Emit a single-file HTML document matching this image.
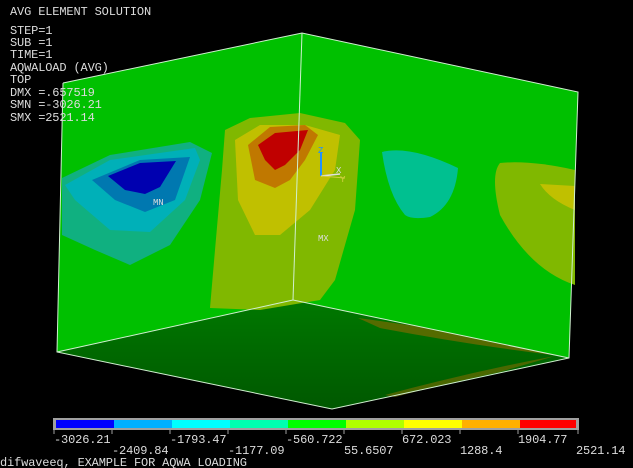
<!DOCTYPE html>
<html><head><meta charset="utf-8"><style>
html,body{margin:0;padding:0;background:#000;}
body{width:633px;height:468px;overflow:hidden;position:relative;}
svg{position:absolute;left:0;top:0;}
.t{font-family:"Liberation Mono",monospace;font-size:12px;fill:#dcdcdc;letter-spacing:-0.15px;}
</style></head><body>
<svg width="633" height="468" viewBox="0 0 633 468">
<defs>
<linearGradient id="bot" x1="0" y1="0" x2="0" y2="1">
<stop offset="0" stop-color="#007800"/><stop offset="1" stop-color="#005800"/>
</linearGradient>
</defs>
<polygon points="57,352 293,300 569,358 332,409" fill="url(#bot)"/>
<path d="M358,318 Q450,330 540,348 L560,356 Q470,345 380,328 Z" fill="#6a6a00" opacity="0.8"/>
<path d="M385,395 Q470,372 555,356 L500,372 Q440,385 395,397 Z" fill="#6a6a00" opacity="0.7"/>
<polygon points="63,83 302,33 293,300 57,352" fill="#00c000"/>
<polygon points="302,33 578,92 569,358 293,300" fill="#00c000"/>
<polygon points="62,178 110,155 190,142 212,153 200,200 170,245 130,265 95,250 62,235" fill="#10b080"/>
<polygon points="65,185 110,160 195,148 200,160 185,200 150,232 110,230 75,200" fill="#00b0b8"/>
<polygon points="92,180 140,160 190,157 175,200 145,212 115,200" fill="#0078b0"/>
<polygon points="108,176 140,163 176,161 160,187 145,194 125,190" fill="#0000b0"/>
<polygon points="225,130 250,118 300,113 345,123 360,140 355,210 335,280 320,300 260,310 210,308 215,250 222,170" fill="#80b800"/>
<polygon points="235,140 260,125 305,125 340,135 335,170 310,210 280,235 255,235 238,200" fill="#c0c000"/>
<polygon points="248,145 270,127 305,125 318,135 305,160 290,180 275,188 255,180" fill="#c07800"/>
<polygon points="258,145 275,133 308,130 300,150 285,165 275,170 265,160" fill="#c00000"/>
<path d="M382,152 Q410,145 458,168 Q455,205 430,217 Q412,220 405,215 Q388,195 382,152 Z" fill="#00c090"/>
<path d="M575,170 Q530,160 500,163 Q490,175 500,215 Q530,270 575,285 Z" fill="#80b800"/>
<path d="M575,186 L540,184 Q550,200 575,210 Z" fill="#c0c000"/>
<g stroke="#d0f0d0" stroke-width="1" fill="none">
<polyline points="63,83 302,33 578,92 569,358 332,409 57,352 63,83"/>
<line x1="302" y1="33" x2="293" y2="300"/>
<line x1="57" y1="352" x2="293" y2="300"/>
<line x1="293" y1="300" x2="569" y2="358"/>
</g>
<line x1="321" y1="152" x2="321" y2="176" stroke="#2090ff" stroke-width="2"/>
<line x1="321" y1="176" x2="340" y2="174" stroke="#e0e0e0" stroke-width="1.5"/>
<line x1="321" y1="176" x2="345" y2="178" stroke="#d0d040" stroke-width="1"/>
<text x="318" y="153" class="t" style="font-size:9px;fill:#2090ff">Z</text>
<text x="336" y="173" class="t" style="font-size:9px">X</text>
<text x="340" y="182" class="t" style="font-size:9px;fill:#d0d040">Y</text>
<text x="153" y="205" class="t" style="font-size:9px">MN</text>
<text x="318" y="241" class="t" style="font-size:9px">MX</text>
<g class="t">
<text x="10" y="15">AVG ELEMENT SOLUTION</text>
<text x="10" y="34">STEP=1</text>
<text x="10" y="46">SUB =1</text>
<text x="10" y="58">TIME=1</text>
<text x="10" y="71">AQWALOAD (AVG)</text>
<text x="10" y="83">TOP</text>
<text x="10" y="96">DMX =.657519</text>
<text x="10" y="108">SMN =-3026.21</text>
<text x="10" y="121">SMX =2521.14</text>
</g>
<rect x="53" y="418" width="526" height="12" fill="#a0a0a0"/>
<rect x="56" y="420" width="58" height="8" fill="#0000ff"/>
<rect x="114" y="420" width="58" height="8" fill="#00b0ff"/>
<rect x="172" y="420" width="58" height="8" fill="#00ffff"/>
<rect x="230" y="420" width="58" height="8" fill="#00ffb0"/>
<rect x="288" y="420" width="58" height="8" fill="#00ff00"/>
<rect x="346" y="420" width="58" height="8" fill="#b0ff00"/>
<rect x="404" y="420" width="58" height="8" fill="#ffff00"/>
<rect x="462" y="420" width="58" height="8" fill="#ffb000"/>
<rect x="520" y="420" width="56" height="8" fill="#ff0000"/>
<g stroke="#a0a0a0"><line x1="54" y1="430" x2="54" y2="434"/><line x1="112" y1="430" x2="112" y2="434"/><line x1="170" y1="430" x2="170" y2="434"/><line x1="228" y1="430" x2="228" y2="434"/><line x1="286" y1="430" x2="286" y2="434"/><line x1="344" y1="430" x2="344" y2="434"/><line x1="402" y1="430" x2="402" y2="434"/><line x1="460" y1="430" x2="460" y2="434"/><line x1="518" y1="430" x2="518" y2="434"/><line x1="578" y1="430" x2="578" y2="434"/></g>
<g class="t">
<text x="54" y="443">-3026.21</text>
<text x="170" y="443">-1793.47</text>
<text x="286" y="443">-560.722</text>
<text x="402" y="443">672.023</text>
<text x="518" y="443">1904.77</text>
<text x="112" y="454">-2409.84</text>
<text x="228" y="454">-1177.09</text>
<text x="344" y="454">55.6507</text>
<text x="460" y="454">1288.4</text>
<text x="576" y="454">2521.14</text>
<text x="0" y="466">difwaveeq, EXAMPLE FOR AQWA LOADING</text>
</g>
</svg>
</body></html>
